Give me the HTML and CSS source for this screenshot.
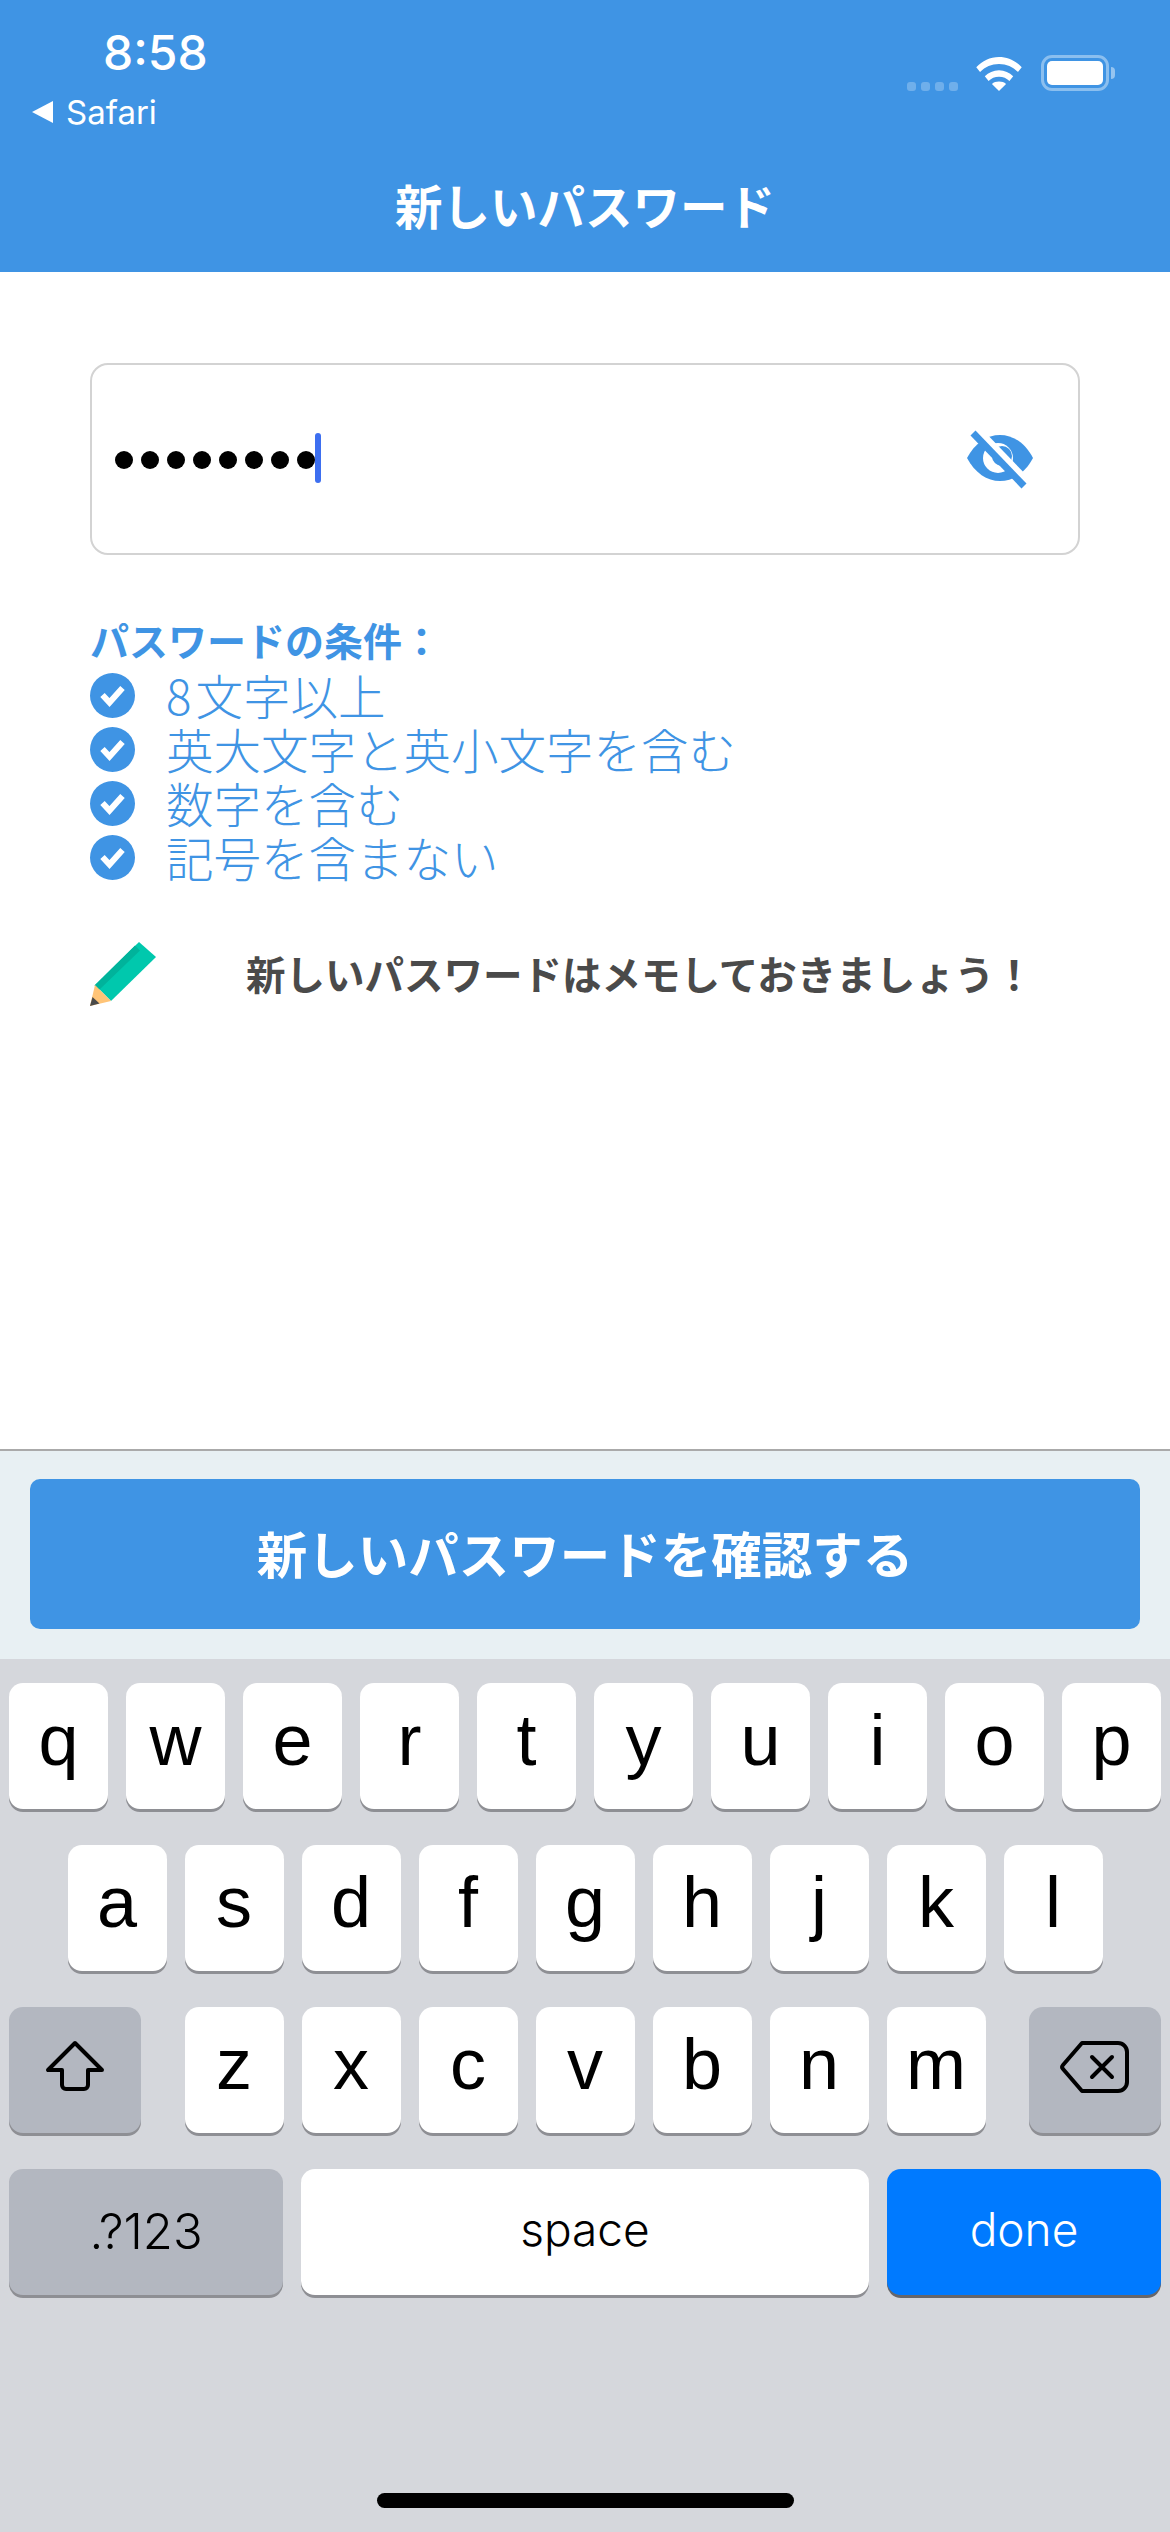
FILE: index.html
```html
<!DOCTYPE html>
<html lang="ja">
<head>
<meta charset="utf-8">
<title>新しいパスワード</title>
<link rel="stylesheet" href="styles.css">
</head>
<body>
<header class="top">
  <div class="status">
    <div class="status-left">
      <div class="time">8:58</div>
      <div class="back"><span class="back-arrow"></span><span>Safari</span></div>
    </div>
    <div class="status-right">
      <div class="signal"><i></i><i></i><i></i><i></i></div>
      <svg class="wifi" width="48" height="36" viewBox="0 0 50 38"><path fill="#fff" d="M1 13C7.500 6 15.500 2 25 2s17.500 4 24 11l-4 5C39.500 12.500 33 9.500 25 9.500S10.500 12.500 5 18z"/><path fill="#fff" d="M10 22.500C14 18.500 19 16 25 16s11 2.500 15 6.500l-4 5C33 24.500 29.500 23 25 23s-8 1.500-11 4.500z"/><path fill="#fff" d="M17.500 30.500C19.500 28.800 22 28 25 28s5.500.8 7.500 2.500L25 38z"/></svg>
      <div class="battery"><div class="battery-body"><div class="battery-fill"></div></div><div class="battery-nub"></div></div>
    </div>
  </div>
  <h1 class="title">新しいパスワード</h1>
</header>

<main class="content">
  <div class="field">
    <div class="dots"><i></i><i></i><i></i><i></i><i></i><i></i><i></i><i></i></div>
    <div class="caret"></div>
    <svg class="eye" width="70" height="60" viewBox="0 0 70 60">
      <path fill="#3f94e4" d="M2 29C10 14 22 6 35 6s25 8 33 23c-8 15-20 23-33 23S10 44 2 29z"/>
      <circle cx="33" cy="29" r="15" fill="#fff"/>
      <circle cx="37" cy="27" r="10" fill="#3f94e4"/>
      <path stroke="#fff" stroke-width="7" d="M14 2l52 54"/>
      <path stroke="#3f94e4" stroke-width="7" d="M8 4l51 53"/>
    </svg>
  </div>

  <h2 class="cond-title">パスワードの条件：</h2>
  <ul class="cond-list">
    <li class="cond"><svg class="check" width="45" height="45" viewBox="0 0 45 45"><circle cx="22.500" cy="22.500" r="22.500" fill="#3f94e4"/><path fill="none" stroke="#fff" stroke-width="6" d="M12.500 22l7 7.500L32.500 15"/></svg><span><span class="digit">8</span>文字以上</span></li>
    <li class="cond"><svg class="check" width="45" height="45" viewBox="0 0 45 45"><circle cx="22.500" cy="22.500" r="22.500" fill="#3f94e4"/><path fill="none" stroke="#fff" stroke-width="6" d="M12.500 22l7 7.500L32.500 15"/></svg><span>英大文字と英小文字を含む</span></li>
    <li class="cond"><svg class="check" width="45" height="45" viewBox="0 0 45 45"><circle cx="22.500" cy="22.500" r="22.500" fill="#3f94e4"/><path fill="none" stroke="#fff" stroke-width="6" d="M12.500 22l7 7.500L32.500 15"/></svg><span>数字を含む</span></li>
    <li class="cond"><svg class="check" width="45" height="45" viewBox="0 0 45 45"><circle cx="22.500" cy="22.500" r="22.500" fill="#3f94e4"/><path fill="none" stroke="#fff" stroke-width="6" d="M12.500 22l7 7.500L32.500 15"/></svg><span>記号を含まない</span></li>
  </ul>

  <div class="note">
    <svg class="pencil" width="67" height="66" viewBox="0 0 67 66">
      <path fill="#00c8ad" d="M49 1l17 15-45 44-16-16z"/>
      <path fill="#00b39b" d="M45 4.500l5 5-41 39.500-4.500-4.500z"/>
      <path fill="#ffc477" d="M5 44l16 16-21 5z"/>
      <path fill="#4a4a4a" d="M2.500 56l7 6.500-9.500 2.500z"/>
    </svg>
    <p class="note-text">新しいパスワードはメモしておきましょう！</p>
  </div>
</main>

<div class="action">
  <button class="confirm">新しいパスワードを確認する</button>
</div>

<section class="keyboard">
  <div class="row">
    <div class="key">q</div><div class="key">w</div><div class="key">e</div><div class="key">r</div><div class="key">t</div><div class="key">y</div><div class="key">u</div><div class="key">i</div><div class="key">o</div><div class="key">p</div>
  </div>
  <div class="row">
    <div class="key">a</div><div class="key">s</div><div class="key">d</div><div class="key">f</div><div class="key">g</div><div class="key">h</div><div class="key">j</div><div class="key">k</div><div class="key">l</div>
  </div>
  <div class="row row-third">
    <div class="key key-mod key-shift"><svg width="60" height="54" viewBox="0 0 60 54"><path fill="none" stroke="#000" stroke-width="4" stroke-linejoin="round" d="M30 3L3 30h14v15a4 4 0 0 0 4 4h18a4 4 0 0 0 4-4V30h14z"/></svg></div>
    <div class="letters"><div class="key">z</div><div class="key">x</div><div class="key">c</div><div class="key">v</div><div class="key">b</div><div class="key">n</div><div class="key">m</div></div>
    <div class="key key-mod key-shift"><svg width="70" height="52" viewBox="0 0 70 52"><path fill="none" stroke="#000" stroke-width="4" stroke-linejoin="round" d="M22 2h36a9 9 0 0 1 9 9v30a9 9 0 0 1-9 9H22L3 28a3 3 0 0 1 0-4z"/><path fill="none" stroke="#000" stroke-width="4" stroke-linecap="round" d="M32 16l20 20M52 16L32 36"/></svg></div>
  </div>
  <div class="row">
    <div class="key key-mod key-word key-num">.?123</div>
    <div class="key key-word key-space">space</div>
    <div class="key key-word key-done">done</div>
  </div>
  <div class="home"></div>
</section>
</body>
</html>
```

FILE: styles.css
```css
* { box-sizing: border-box; }
html, body { margin: 0; padding: 0; }
body {
  width: 1170px;
  height: 2532px;
  display: flex;
  flex-direction: column;
  background: #fff;
  font-family: "Noto Sans CJK JP", "Noto Sans", sans-serif;
  overflow: hidden;
}

/* header */
.top {
  height: 272px;
  flex: none;
  background: #3f94e4;
  color: #fff;
}
.status {
  height: 176px;
  display: flex;
  justify-content: space-between;
  align-items: flex-start;
}
.status-left { padding: 24px 0 0 32px; }
.time {
  font-family: Inter, sans-serif;
  font-weight: 500;
  font-size: 48px;
  line-height: 58px;
  margin-left: 71px;
}
.back {
  display: flex;
  align-items: center;
  gap: 13px;
  margin-top: 10px;
  font-family: Inter, sans-serif;
  font-size: 33px;
  line-height: 40px;
}
.back-arrow {
  width: 0;
  height: 0;
  border-top: 11px solid transparent;
  border-bottom: 11px solid transparent;
  border-right: 21px solid #fff;
}
.status-right {
  display: flex;
  align-items: flex-end;
  padding: 55px 55px 0 0;
}
.signal { display: flex; gap: 5px; margin-right: 17px; }
.signal i {
  width: 9px;
  height: 9px;
  border-radius: 3px;
  background: rgba(255, 255, 255, .25);
}
.wifi { margin: 0 18px 0 0; }
.battery { display: flex; align-items: center; gap: 2px; }
.battery-body {
  width: 68px;
  height: 36px;
  border: 3px solid rgba(255, 255, 255, .4);
  border-radius: 11px;
  padding: 3px;
}
.battery-fill { height: 100%; background: #fff; border-radius: 5px; }
.battery-nub {
  width: 4px;
  height: 12px;
  background: rgba(255, 255, 255, .45);
  border-radius: 0 4px 4px 0;
}
.title {
  margin: -1px 0 0;
  text-align: center;
  font-size: 47.500px;
  line-height: 60px;
  font-weight: 700;
}

/* content */
.content { flex: 1; padding: 91px 90px 0; }
.field {
  height: 192px;
  border: 2px solid #d3d3d3;
  border-radius: 18px;
  display: flex;
  align-items: center;
  padding: 0 43px 0 23px;
}
.dots { display: flex; gap: 8px; margin-top: 1px; }
.dots i { width: 18px; height: 18px; border-radius: 50%; background: #000; }
.caret {
  width: 6px;
  height: 50px;
  margin-top: -2px;
  border-radius: 3px;
  background: #3d6ff0;
}
.eye { margin-left: auto; }
.cond-title {
  margin: 59px 0 0;
  font-size: 39px;
  line-height: 50px;
  font-weight: 700;
  color: #3f94e4;
}
.cond-list { list-style: none; margin: 4px 0 0; padding: 0; }
.cond {
  height: 54px;
  display: flex;
  align-items: center;
  gap: 31px;
  color: #3f94e4;
  font-size: 47.500px;
  font-weight: 300;
  line-height: 54px;
  white-space: nowrap;
}
.digit { margin-right: 4px; }
.check { flex: none; }
.note {
  display: flex;
  align-items: center;
  margin-top: 57px;
}
.pencil { flex: none; }
.note-text {
  margin: -2px 0 0 89px;
  font-size: 39.500px;
  line-height: 56px;
  font-weight: 700;
  color: #4a4a4a;
  white-space: nowrap;
}

/* action bar */
.action {
  height: 210px;
  flex: none;
  border-top: 2px solid #aaa;
  background: #e8f0f3;
  padding: 28px 30px 0;
}
.confirm {
  display: block;
  width: 100%;
  height: 150px;
  border: 0;
  border-radius: 10px;
  background: #3f94e4;
  color: #fff;
  font-family: inherit;
  font-size: 50.500px;
  font-weight: 700;
  padding: 0 0 4px;
}

/* keyboard */
.keyboard {
  height: 873px;
  flex: none;
  position: relative;
  background: #d5d7dc;
  padding-top: 24px;
  font-family: "Liberation Sans", Arial, sans-serif;
}
.row {
  display: flex;
  justify-content: center;
  gap: 18px;
  margin-bottom: 36px;
  padding: 0 9px;
}
.row-third { justify-content: space-between; }
.letters { display: flex; gap: 18px; }
.key {
  width: 99px;
  height: 126px;
  flex: none;
  display: flex;
  align-items: center;
  justify-content: center;
  background: #fff;
  border-radius: 14px;
  box-shadow: 0 3px 0 #8e8f94;
  font-size: 72px;
  line-height: 1;
  color: #000;
  padding-bottom: 12px;
}
.key-mod { background: #b3b7c0; }
.key-shift { width: 132px; padding-bottom: 6px; }
.key-word { font-family: Inter, sans-serif; font-size: 46px; font-weight: 350; padding-bottom: 6px; }
.key-num { width: 274px; font-size: 49px; padding-bottom: 2px; }
.key-space { width: 568px; }
.key-done { width: 274px; background: #007aff; color: #fff; box-shadow: 0 3px 0 #66666a; }
.home {
  position: absolute;
  left: 377px;
  bottom: 24px;
  width: 417px;
  height: 15px;
  border-radius: 8px;
  background: #000;
}
```
